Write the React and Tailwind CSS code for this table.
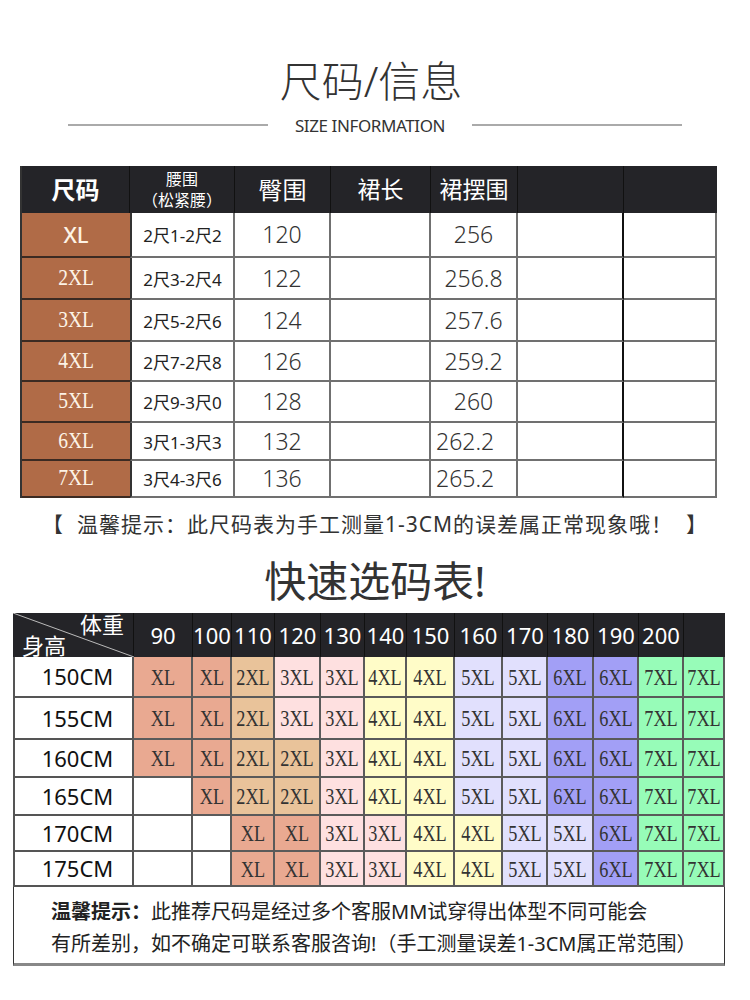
import React from "react";

const t1 = [
  { s: "XL", w: "2尺1-2尺2", h: "120", b: "256", rh: "h-[45px]" },
  { s: "2XL", w: "2尺3-2尺4", h: "122", b: "256.8", rh: "h-[42px]" },
  { s: "3XL", w: "2尺5-2尺6", h: "124", b: "257.6", rh: "h-[42px]" },
  { s: "4XL", w: "2尺7-2尺8", h: "126", b: "259.2", rh: "h-[40px]" },
  { s: "5XL", w: "2尺9-3尺0", h: "128", b: "260", rh: "h-[41px]" },
  { s: "6XL", w: "3尺1-3尺3", h: "132", b: "262.2", rh: "h-[38px]", left: true },
  { s: "7XL", w: "3尺4-3尺6", h: "136", b: "265.2", rh: "h-[37px]", left: true },
];

const weights = ["90", "100", "110", "120", "130", "140", "150", "160", "170", "180", "190", "200", ""];

const t2 = [
  { h: "150CM", rh: "h-[41px]", c: ["XL", "XL", "2XL", "3XL", "3XL", "4XL", "4XL", "5XL", "5XL", "6XL", "6XL", "7XL", "7XL"] },
  { h: "155CM", rh: "h-[42px]", c: ["XL", "XL", "2XL", "3XL", "3XL", "4XL", "4XL", "5XL", "5XL", "6XL", "6XL", "7XL", "7XL"] },
  { h: "160CM", rh: "h-[38px]", c: ["XL", "XL", "2XL", "2XL", "3XL", "4XL", "4XL", "5XL", "5XL", "6XL", "6XL", "7XL", "7XL"] },
  { h: "165CM", rh: "h-[38px]", c: ["", "XL", "2XL", "2XL", "3XL", "4XL", "4XL", "5XL", "5XL", "6XL", "6XL", "7XL", "7XL"] },
  { h: "170CM", rh: "h-[36px]", c: ["", "", "XL", "XL", "3XL", "3XL", "4XL", "4XL", "5XL", "5XL", "6XL", "7XL", "7XL"] },
  { h: "175CM", rh: "h-[35px]", c: ["", "", "XL", "XL", "3XL", "3XL", "4XL", "4XL", "5XL", "5XL", "6XL", "7XL", "7XL"] },
];

const colW = ["w-[59px]", "w-[39px]", "w-[43px]", "w-[46px]", "w-[44px]", "w-[42px]", "w-[48px]", "w-[48px]", "w-[45px]", "w-[46px]", "w-[45px]", "w-[45px]", "w-[41px]"];

const bg = {
  XL: "bg-[#e9a991]",
  "2XL": "bg-[#e9c39a]",
  "3XL": "bg-[#fee0e0]",
  "4XL": "bg-[#fffcc8]",
  "5XL": "bg-[#e1e0fd]",
  "6XL": "bg-[#a29ff6]",
  "7XL": "bg-[#97fcb8]",
  "": "bg-white",
};

const serif = "font-['Liberation_Serif',serif]";

export default function App() {
  return (
    <div className="w-[750px] h-[1000px] bg-white font-['Noto_Sans','Noto_Sans_CJK_SC',sans-serif] text-[#222] overflow-hidden">
      {/* Title */}
      <div className="mt-[60px] h-[42px] flex items-center justify-center pr-[8px] text-[42px] leading-none font-light text-[#333]">
        尺码/信息
      </div>
      <div className="mt-[13px] h-[20px] flex items-center justify-center">
        <div className="w-[200px] h-[2px] bg-[#aaa]" />
        <div className="mx-[27px] text-[17px] leading-none text-[#333] tracking-[-0.4px]">SIZE INFORMATION</div>
        <div className="w-[210px] h-[2px] bg-[#aaa]" />
      </div>

      {/* Table 1 */}
      <div className="mt-[31px] ml-[20px] w-[697px] border-l-2 border-[#333]">
        <div className="flex h-[47px] bg-[#242428] text-white">
          <div className="w-[108px] flex items-center justify-center text-[24px] font-bold border-r border-[#111]">尺码</div>
          <div className="w-[105px] flex flex-col items-center justify-center text-[16px] leading-[21px] border-r border-[#111]">
            <span>腰围</span>
            <span>（松紧腰）</span>
          </div>
          <div className="w-[96px] flex items-center justify-center text-[24px] border-r border-[#111]">臀围</div>
          <div className="w-[100px] flex items-center justify-center text-[23px] border-r border-[#111]">裙长</div>
          <div className="w-[87px] flex items-center justify-center text-[23px] border-r border-[#111]">裙摆围</div>
          <div className="w-[106px] border-r border-[#111]" />
          <div className="w-[93px]" />
        </div>
        {t1.map((r, i) => (
          <div key={i} className={`flex ${r.rh}`}>
            <div className={`w-[108px] bg-[#b06b47] flex items-center justify-center text-[#fdf3e6] border-b-2 border-[#3b2a22] ${i === 6 ? "border-b-0" : ""}`}>
              {r.s === "XL" ? (
                <span className="text-[22px] font-medium">XL</span>
              ) : (
                <span className={`${serif} text-[23px] inline-block scale-x-[0.85]`}>{r.s}</span>
              )}
            </div>
            <div className="w-[105px] flex items-center justify-center text-[17px] text-[#222] border-l-2 border-l-[#333] border-r-2 border-b-2 border-[#707070] pt-[3px]">{r.w}</div>
            <div className="w-[96px] flex items-center justify-center text-[23px] font-light text-[#333] border-r-2 border-b-2 border-[#707070]">{r.h}</div>
            <div className="w-[100px] border-r-2 border-b-2 border-[#707070]" />
            <div className={`w-[87px] flex items-center ${r.left ? "justify-start pl-[5px]" : "justify-center"} text-[23px] font-light text-[#333] border-r-2 border-b-2 border-[#707070]`}>{r.b}</div>
            <div className="w-[106px] border-r-2 border-r-[#111] border-b-2 border-[#707070]" />
            <div className="w-[93px] border-r-2 border-b-2 border-[#707070]" />
          </div>
        ))}
      </div>

      {/* Tip */}
      <div className="mt-[14px] h-[24px] flex items-center justify-center text-[21px] leading-none text-[#333] tracking-[1px] whitespace-nowrap">
        【&nbsp;&nbsp;温馨提示：此尺码表为手工测量1-3CM的误差属正常现象哦！&nbsp;&nbsp;】
      </div>

      <div className="mt-[23px] h-[44px] flex items-center justify-center text-[42px] leading-none text-[#333]">
        快速选码表!
      </div>

      {/* Table 2 */}
      <div className="mt-[10px] ml-[13px] w-[712px]">
        <div className="flex h-[44px] bg-[#242428] text-white">
          <div className="relative w-[121px] flex flex-col justify-between pt-[1px] pb-[2px] border-r border-[#111]">
            <svg className="absolute inset-0" width="121" height="44" viewBox="0 0 121 44">
              <line x1="0" y1="0" x2="121" y2="44" stroke="#bbb" strokeWidth="1" />
            </svg>
            <span className="relative self-end pr-[9px] text-[22px] leading-[20px]">体重</span>
            <span className="relative self-start pl-[9px] text-[22px] leading-[20px]">身高</span>
          </div>
          {weights.map((w, i) => (
            <div key={i} className={`${colW[i]} flex items-center justify-center text-[22px] whitespace-nowrap border-r border-[#111] ${i === 12 ? "border-r-0" : ""}`}>
              {w}
            </div>
          ))}
        </div>
        {t2.map((r, ri) => (
          <div key={ri} className={`flex ${r.rh}`}>
            <div className="w-[121px] flex items-center justify-center pl-[8px] text-[22px] text-[#111] border-l-2 border-r-2 border-b-2 border-[#555]">{r.h}</div>
            {r.c.map((c, ci) => (
              <div key={ci} className={`${colW[ci]} ${bg[c]} flex items-center justify-center text-[#333] border-r-2 border-b-2 border-[#5a5a5a] overflow-visible`}>
                {c && <span className={`${serif} text-[24px] leading-none inline-block scale-x-[0.76] whitespace-nowrap`}>{c}</span>}
              </div>
            ))}
          </div>
        ))}
        <div className="h-[79px] border-l border-r border-[#333] border-b-[3px] border-b-[#888] pt-[9px] pl-[37px] text-[20px] leading-[32px] text-[#222] whitespace-nowrap">
          <div>
            <span className="font-bold">温馨提示：</span>此推荐尺码是经过多个客服MM试穿得出体型不同可能会
          </div>
          <div>有所差别，如不确定可联系客服咨询!（手工测量误差1-3CM属正常范围）</div>
        </div>
      </div>
    </div>
  );
}
